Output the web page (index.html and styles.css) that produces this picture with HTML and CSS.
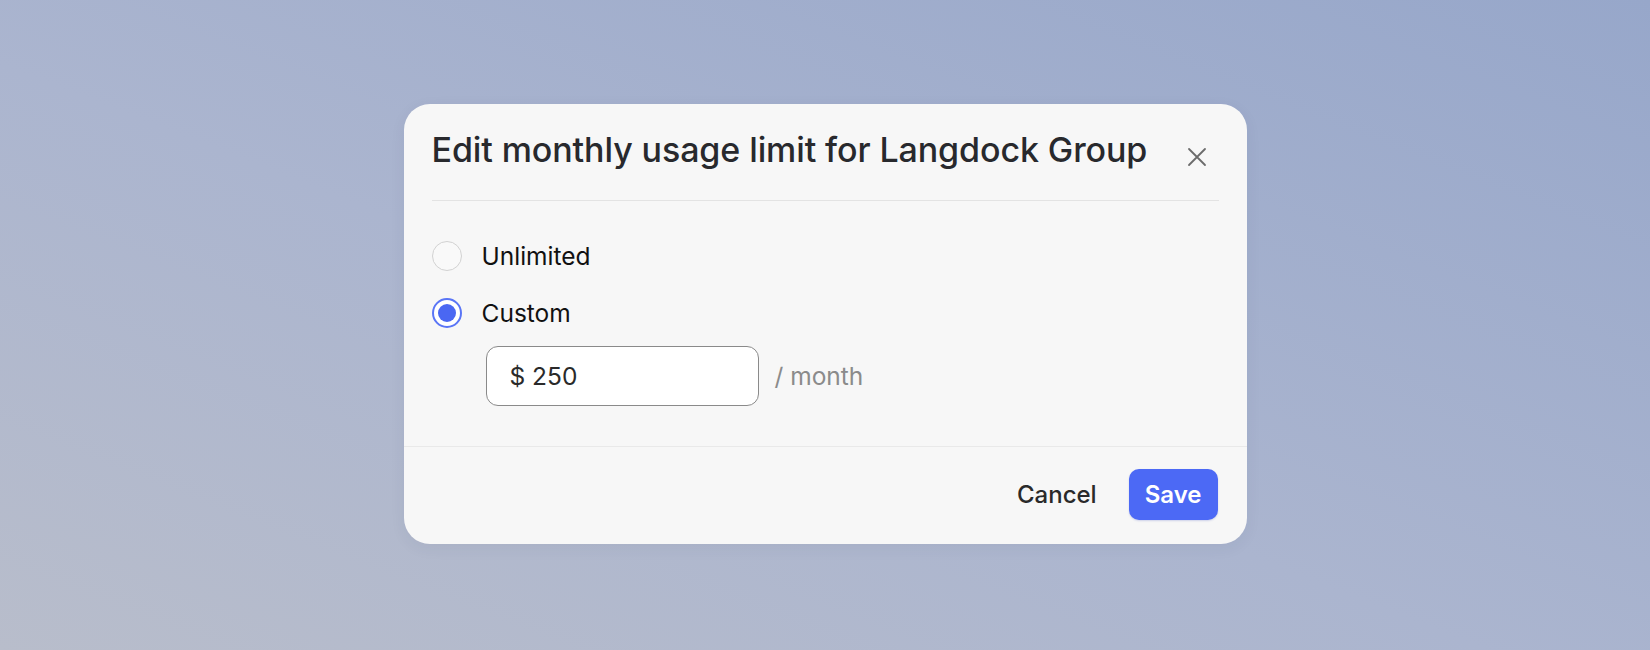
FILE: index.html
```html
<!DOCTYPE html>
<html lang="en">
<head>
  <meta charset="UTF-8" />
  <meta name="viewport" content="width=device-width, initial-scale=1.0"/>
  <title>Edit usage limit</title>
  <link rel="stylesheet" href="styles.css">
</head>
<body>
  <div class="dialog">
    <div class="dialog-header">
      <h2 class="dialog-title">Edit monthly usage limit for Langdock Group</h2>
      <button class="close-btn" aria-label="Close">
        <svg width="20" height="20" viewBox="0 0 20 20" fill="none" stroke="#6b6b6b" stroke-width="1.8" stroke-linecap="round">
          <path d="M2 2 L18 18 M18 2 L2 18"/>
        </svg>
      </button>
    </div>
    <div class="divider"></div>

    <div class="dialog-body">
      <label class="radio-row">
        <span class="radio"></span>
        <span class="radio-label">Unlimited</span>
      </label>
      <label class="radio-row">
        <span class="radio checked"></span>
        <span class="radio-label">Custom</span>
      </label>
      <div class="amount-row">
        <div class="amount-input">$ 250</div>
        <span class="unit">/ month</span>
      </div>
    </div>

    <div class="dialog-footer">
      <button class="btn btn-cancel">Cancel</button>
      <button class="btn btn-save">Save</button>
    </div>
  </div>
</body>
</html>
```

FILE: styles.css
```css
html, body {
  margin: 0;
  height: 100%;
}
body {
  font-family: Inter, "Noto Sans", sans-serif;
  background: linear-gradient(to top right, #b8bdcb 0%, #abb5cf 45%, #97a7ca 100%);
  display: flex;
  align-items: center;
  justify-content: center;
}
.dialog {
  width: 843px;
  background: #f7f7f7;
  border-radius: 26px;
  box-shadow: 0 4px 16px rgba(40, 50, 80, 0.06);
  margin-top: -2px;
}
.dialog-header {
  display: flex;
  align-items: center;
  justify-content: space-between;
  padding: 26px 40px 0 28px;
}
.dialog-title {
  margin: 0;
  font-size: 34px;
  line-height: 40px;
  font-weight: 500;
  color: #28292d;
  letter-spacing: -0.1px;
}
.close-btn {
  border: none;
  background: none;
  padding: 0;
  width: 20px;
  height: 20px;
  margin-top: 14px;
  cursor: pointer;
}
.divider {
  height: 1px;
  background: #e3e3e3;
  margin: 30px 28px 0;
}
.dialog-body {
  padding: 40px 28px 40px;
}
.radio-row {
  display: flex;
  align-items: center;
  gap: 20px;
  height: 30px;
  margin-bottom: 27px;
}
.radio-row + .radio-row {
  margin-bottom: 18px;
}
.radio {
  box-sizing: border-box;
  width: 30px;
  height: 30px;
  border-radius: 50%;
  border: 1.5px solid #d2d2d2;
  background: #f9f9f9;
  position: relative;
}
.radio.checked {
  border: 2px solid #5a75f6;
  background: #fff;
}
.radio.checked::after {
  content: "";
  position: absolute;
  inset: 4px;
  border-radius: 50%;
  background: #4a67f2;
}
.radio-label {
  font-size: 24.5px;
  color: #111;
}
.amount-row {
  display: flex;
  align-items: center;
  gap: 16px;
  padding-left: 54px;
}
.amount-input {
  box-sizing: border-box;
  width: 273px;
  height: 60px;
  border: 1.5px solid #8a8a8a;
  border-radius: 12px;
  background: #fff;
  padding: 0 23px;
  display: flex;
  align-items: center;
  font-size: 24.5px;
  color: #2a2a2a;
}
.unit {
  font-size: 24.5px;
  color: #8b8b8b;
}
.dialog-footer {
  border-top: 1px solid #e9e9e9;
  display: flex;
  justify-content: flex-end;
  align-items: center;
  gap: 16px;
  padding: 22px 29px 24px;
}
.btn {
  font-family: Inter, "Noto Sans", sans-serif;
  font-size: 24px;
  font-weight: 500;
  border: none;
  border-radius: 10px;
  height: 51px;
  cursor: pointer;
}
.btn-cancel {
  background: none;
  color: #2a2a2a;
  padding: 0 16px;
}
.btn-save {
  background: #4c69f5;
  color: #fff;
  padding: 0 16px;
  font-weight: 600;
  box-shadow: 0 1px 2px rgba(40, 60, 180, 0.2);
}
```
